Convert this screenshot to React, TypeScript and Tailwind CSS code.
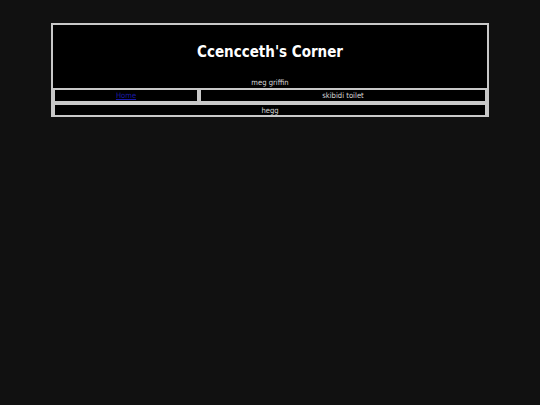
export default function App() {
  return (
    <div className="min-h-[405px] w-full bg-[#111111] pt-[23px] font-['DejaVu_Sans_Condensed','DejaVu_Sans',sans-serif] text-[#d8d8d8] antialiased">
      <div className="ml-[51px] flex w-[438px] flex-col border-2 border-[#c8c8c8] bg-black">
        <div className="flex h-[63px] flex-col items-center pt-[17px]">
          <h1 className="text-[15px] leading-[20px] font-bold text-white">Ccencceth's Corner</h1>
          <p className="mt-[15px] text-[7.6px] leading-[11px]">meg griffin</p>
        </div>
        <div className="flex h-[15px]">
          <div className="flex w-[146px] items-center justify-center border-2 border-[#c8c8c8]">
            <a href="#" className="text-[7.6px] leading-[11px] text-[#1c1ca8] underline">
              Home
            </a>
          </div>
          <div className="flex flex-1 items-center justify-center border-2 border-[#c8c8c8]">
            <span className="text-[7.6px] leading-[11px]">skibidi toilet</span>
          </div>
        </div>
        <div className="flex h-[12px] items-center justify-center border-x-2 border-t-2 border-[#c8c8c8]">
          <span className="text-[7.6px] leading-[11px]">hegg</span>
        </div>
      </div>
    </div>
  );
}
